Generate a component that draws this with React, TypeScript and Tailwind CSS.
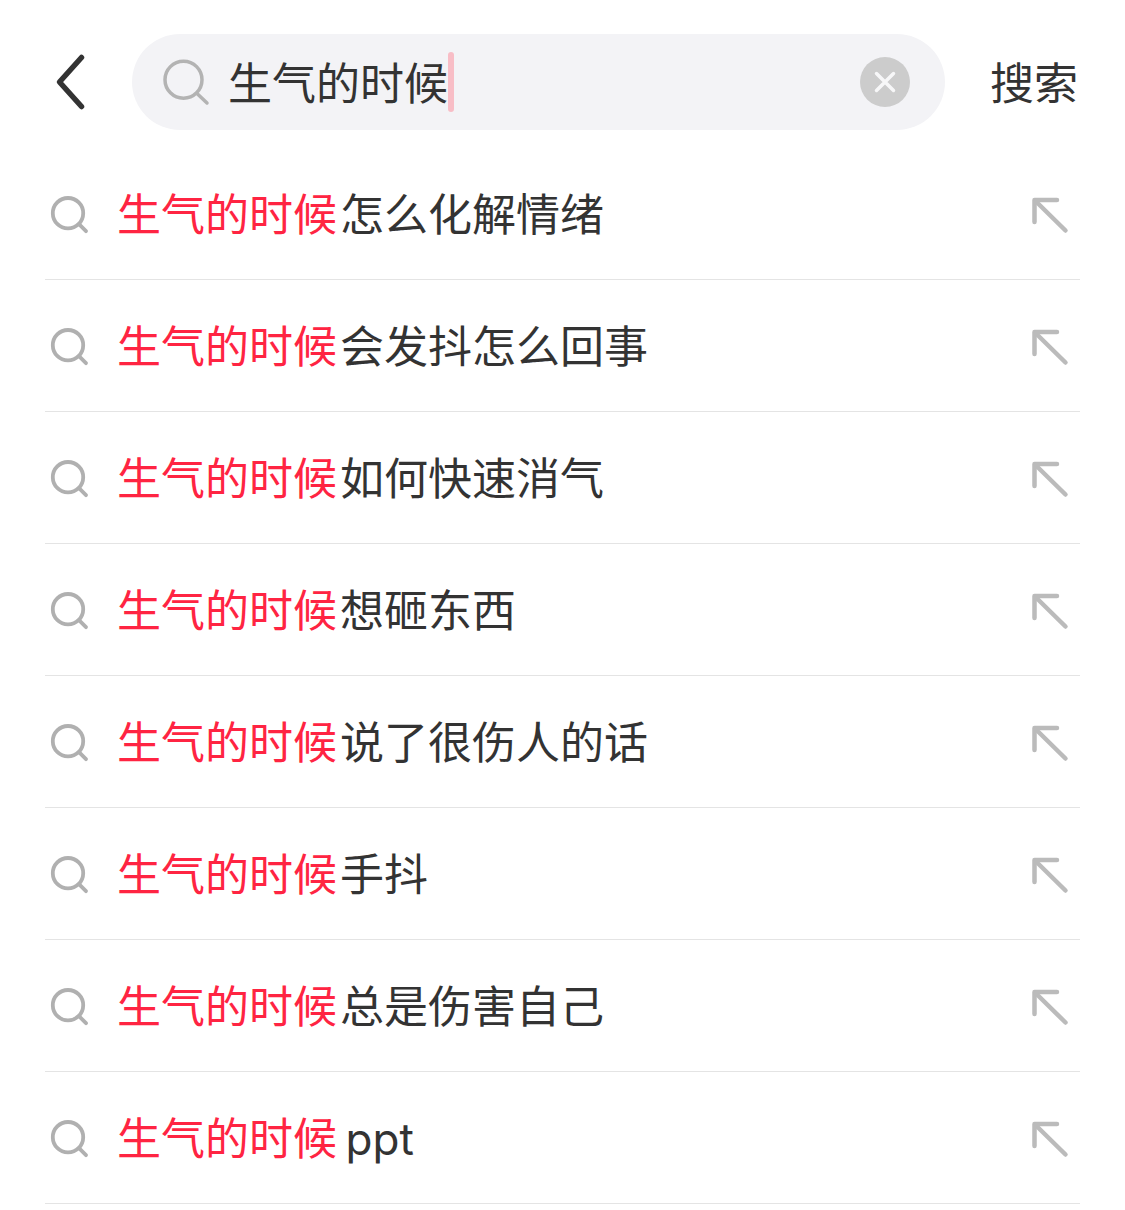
import { useState } from 'react';

const KEYWORD = '生气的时候';

const suggestions = [
    '怎么化解情绪',
    '会发抖怎么回事',
    '如何快速消气',
    '想砸东西',
    '说了很伤人的话',
    '手抖',
    '总是伤害自己',
    'ppt',
];

function SearchIcon() {
    return (
        <svg viewBox="0 0 48 48" fill="none" stroke="#b3b3b3" strokeWidth="3.5" strokeLinecap="round" className="size-12 shrink-0" aria-hidden="true">
            <circle cx="21.5" cy="21.7" r="18.5" />
            <path d="M35 35.5L45 45" />
        </svg>
    );
}

function SmallSearchIcon() {
    return (
        <svg viewBox="0 0 40 40" fill="none" stroke="#b0b0b0" strokeWidth="3.8" strokeLinecap="round" className="size-10 shrink-0" aria-hidden="true">
            <circle cx="18" cy="18.2" r="15.2" />
            <path d="M29.5 29.7L36 36.2" />
        </svg>
    );
}

function FillArrowIcon() {
    return (
        <svg viewBox="0 0 40 40" fill="none" stroke="#bbbbbb" strokeWidth="4.5" strokeLinecap="round" strokeLinejoin="round" className="size-10" aria-hidden="true">
            <path d="M27 5H4.5V27" />
            <path d="M5.5 6L35.5 35.5" />
        </svg>
    );
}

function SuggestionRow({ text, onFill }: { text: string; onFill: () => void }) {
    return (
        <li className="flex items-center h-[132px] border-b border-[#e4e4e4] pt-[2px] pl-[5px] pr-[10px]">
            <a href="#" className="flex flex-1 items-center gap-[27px]">
                <SmallSearchIcon />
                <span className="text-[44px] leading-[60px] text-[#333333] [text-autospace:normal]">
                    <span className="mr-[3px] text-[#ff2442]">{KEYWORD}</span>
                    {text}
                </span>
            </a>
            <button type="button" aria-label="填入搜索框" onClick={onFill} className="cursor-pointer">
                <FillArrowIcon />
            </button>
        </li>
    );
}

export default function App() {
    const [query, setQuery] = useState(KEYWORD);

    return (
        <main className="min-h-screen bg-white font-['Inter','Noto_Sans_CJK_SC',sans-serif] text-[#333333]">
            <header className="flex items-center pt-[34px] pb-[18px] pl-[52px] pr-[47px]">
                <button type="button" aria-label="返回" className="shrink-0 cursor-pointer">
                    <svg viewBox="0 0 36 60" fill="none" stroke="#333333" strokeWidth="5.5" strokeLinecap="round" strokeLinejoin="round" className="w-9 h-[60px]" aria-hidden="true">
                        <path d="M29.5 5.5L7.5 30L29.5 54.5" />
                    </svg>
                </button>
                <form className="flex flex-1 items-center" onSubmit={e => e.preventDefault()}>
                    <label className="flex flex-1 items-center h-24 ml-11 pl-[30px] pr-[35px] rounded-full bg-[#f3f3f6]">
                        <SearchIcon />
                        <input
                            type="text"
                            aria-label="搜索内容"
                            value={query}
                            onChange={e => setQuery(e.target.value)}
                            className="field-sizing-content ml-[18px] pt-1 bg-transparent text-[44px] leading-[60px] caret-transparent outline-none"
                        />
                        <span className="w-[6px] h-[60px] rounded-sm bg-[#f8bdc6]" />
                        <button type="button" aria-label="清空" onClick={() => setQuery('')} className="ml-auto shrink-0 cursor-pointer">
                            <svg viewBox="0 0 50 50" className="size-[50px]" aria-hidden="true">
                                <circle cx="25" cy="25" r="25" fill="#cccccc" />
                                <path d="M16.5 16.5L33.5 33.5M33.5 16.5L16.5 33.5" stroke="#f7f7f8" strokeWidth="3.5" strokeLinecap="round" />
                            </svg>
                        </button>
                    </label>
                    <button type="submit" className="ml-[45px] pt-1 text-[44px] leading-[60px] cursor-pointer">搜索</button>
                </form>
            </header>
            <ul className="mx-[45px]">
                {suggestions.map(text => (
                    <SuggestionRow key={text} text={text} onFill={() => setQuery(KEYWORD + text)} />
                ))}
            </ul>
        </main>
    );
}
